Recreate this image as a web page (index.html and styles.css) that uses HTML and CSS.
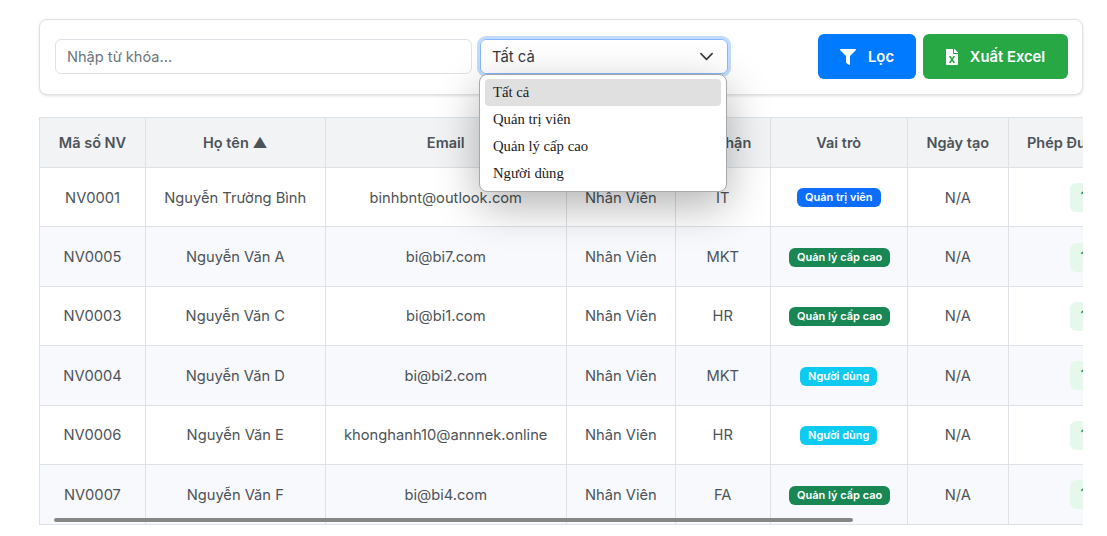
FILE: index.html
```html
<!DOCTYPE html>
<html lang="en">
<head>
    <meta charset="UTF-8">
    <meta name="viewport" content="width=device-width, initial-scale=1.0">
    <title>Danh sách nhân viên</title>
    <link rel="stylesheet" href="styles.css">
</head>
<body>
    <div class="page">
        <div class="filter-panel">
            <input class="keyword" type="text" placeholder="Nhập từ khóa...">
            <div class="role-select">
                <div class="select-box">
                    <span>Tất cả</span>
                    <svg class="chevron" viewBox="0 0 16 16"><path d="M2 5l6 6 6-6"/></svg>
                </div>
                <ul class="select-menu">
                    <li class="active">Tất cả</li>
                    <li>Quản trị viên</li>
                    <li>Quản lý cấp cao</li>
                    <li>Người dùng</li>
                </ul>
            </div>
            <div class="actions">
                <button class="btn btn-filter">
                    <svg class="icon" viewBox="0 0 512 512"><path d="M487.976 0H24.028C2.71 0-8.047 25.866 7.058 40.971L192 225.941V432c0 7.831 3.821 15.17 10.237 19.662l80 55.98C298.02 518.69 320 507.493 320 487.98V225.941l184.947-184.97C520.021 25.896 509.338 0 487.976 0z"/></svg>
                    Lọc
                </button>
                <button class="btn btn-excel">
                    <svg class="icon icon-file" viewBox="0 0 384 512"><path d="M224 136V0H24C10.7 0 0 10.7 0 24v464c0 13.3 10.7 24 24 24h336c13.3 0 24-10.7 24-24V160H248c-13.2 0-24-10.8-24-24zm60.1 106.5L224 336l60.1 93.5c5.1 8-.6 18.5-10.1 18.5h-34.9c-4.4 0-8.5-2.4-10.6-6.3C208.9 405.5 192 373 192 373c-6.4 14.8-10 20-36.6 68.8-2.1 3.9-6.1 6.3-10.5 6.3H110c-9.5 0-15.2-10.5-10.1-18.5l60.3-93.5-60.3-93.5c-5.2-8 .6-18.5 10.1-18.5h34.8c4.4 0 8.5 2.4 10.6 6.3 26.1 48.8 20 33.6 36.6 68.5 0 0 6.1-11.7 36.6-68.5 2.1-3.9 6.2-6.3 10.6-6.3H274c9.5-.1 15.2 10.4 10.1 18.4zM384 121.9v6.1H256V0h6.1c6.4 0 12.5 2.5 17 7l97.9 98c4.5 4.5 7 10.6 7 16.9z"/></svg>
                    Xuất Excel
                </button>
            </div>
        </div>

        <div class="table-wrap">
            <table class="staff-table">
                <colgroup>
                    <col class="c-id"><col class="c-name"><col class="c-email"><col class="c-pos">
                    <col class="c-dept"><col class="c-role"><col class="c-date"><col class="c-leave">
                </colgroup>
                <thead>
                    <tr>
                        <th>Mã số NV</th>
                        <th>Họ tên ▲</th>
                        <th>Email</th>
                        <th>Chức vụ</th>
                        <th>Bộ phận</th>
                        <th>Vai trò</th>
                        <th>Ngày tạo</th>
                        <th>Phép Được Hưởng</th>
                    </tr>
                </thead>
                <tbody>
                    <tr>
                        <td>NV0001</td><td>Nguyễn Trường Bình</td><td>binhbnt@outlook.com</td><td>Nhân Viên</td><td>IT</td>
                        <td><span class="badge badge-admin">Quản trị viên</span></td><td>N/A</td><td><span class="leave">12</span></td>
                    </tr>
                    <tr>
                        <td>NV0005</td><td>Nguyễn Văn A</td><td>bi@bi7.com</td><td>Nhân Viên</td><td>MKT</td>
                        <td><span class="badge badge-manager">Quản lý cấp cao</span></td><td>N/A</td><td><span class="leave">12</span></td>
                    </tr>
                    <tr>
                        <td>NV0003</td><td>Nguyễn Văn C</td><td>bi@bi1.com</td><td>Nhân Viên</td><td>HR</td>
                        <td><span class="badge badge-manager">Quản lý cấp cao</span></td><td>N/A</td><td><span class="leave">12</span></td>
                    </tr>
                    <tr>
                        <td>NV0004</td><td>Nguyễn Văn D</td><td>bi@bi2.com</td><td>Nhân Viên</td><td>MKT</td>
                        <td><span class="badge badge-user">Người dùng</span></td><td>N/A</td><td><span class="leave">12</span></td>
                    </tr>
                    <tr>
                        <td>NV0006</td><td>Nguyễn Văn E</td><td>khonghanh10@annnek.online</td><td>Nhân Viên</td><td>HR</td>
                        <td><span class="badge badge-user">Người dùng</span></td><td>N/A</td><td><span class="leave">12</span></td>
                    </tr>
                    <tr>
                        <td>NV0007</td><td>Nguyễn Văn F</td><td>bi@bi4.com</td><td>Nhân Viên</td><td>FA</td>
                        <td><span class="badge badge-manager">Quản lý cấp cao</span></td><td>N/A</td><td><span class="leave">12</span></td>
                    </tr>
                </tbody>
            </table>
            <div class="scroll-thumb"></div>
        </div>
    </div>
</body>
</html>
```

FILE: styles.css
```css
* {
    box-sizing: border-box;
}
body {
    font-family: Inter, "Noto Sans", sans-serif;
    margin: 0;
    background-color: #fff;
    color: #4d5359;
}
.page {
    padding: 19px 24px 0 39px;
}
.filter-panel {
    display: flex;
    align-items: center;
    height: 76px;
    padding: 0 14px 2px 15px;
    border: 1px solid #dee2e6;
    border-radius: 8px;
    box-shadow: 0 1px 3px rgba(0,0,0,0.12);
    background-color: #fff;
}
.keyword {
    width: 417px;
    height: 35px;
    padding: 2px 11px 0;
    border: 1px solid #dee2e6;
    border-radius: 6px;
    font-family: inherit;
    font-size: 14.6px;
    color: #495057;
}
.keyword::placeholder {
    color: #6c757d;
}
.role-select {
    position: relative;
    width: 248px;
    margin-left: 8px;
}
.select-box {
    display: flex;
    align-items: center;
    justify-content: space-between;
    height: 35px;
    padding: 0 13px 0 11px;
    border: 1px solid #86b7fe;
    border-radius: 6px;
    box-shadow: 0 0 0 3px #c2dbfe;
    font-size: 14.8px;
    color: #343a40;
}
.select-box span {
    padding-top: 2px;
}
.chevron {
    width: 15px;
    height: 15px;
    fill: none;
    stroke: #343a40;
    stroke-width: 1.7;
    stroke-linecap: round;
    stroke-linejoin: round;
}
.select-menu {
    position: absolute;
    top: 35px;
    left: -1px;
    z-index: 10;
    width: 248px;
    height: 118px;
    margin: 0;
    padding: 4px 5px;
    list-style: none;
    background-color: #fff;
    border: 1px solid #a8a8a8;
    border-radius: 8px;
    box-shadow: 0 14px 44px rgba(0,0,0,0.3);
    font-family: "Liberation Serif", serif;
    font-size: 14.7px;
    color: #1a1a1a;
}
.select-menu li {
    height: 27px;
    line-height: 27px;
    padding: 0 8px;
    border-radius: 4px;
}
.select-menu .active {
    background-color: #e0e0e0;
}
.actions {
    display: flex;
    gap: 7px;
    margin-left: auto;
}
.btn {
    display: flex;
    align-items: center;
    justify-content: center;
    height: 45px;
    padding-top: 2px;
    border: none;
    border-radius: 6px;
    font-family: inherit;
    font-size: 14.8px;
    font-weight: 600;
    color: #fff;
}
.btn-filter {
    width: 98px;
    gap: 12px;
    background-color: #007bff;
}
.btn-excel {
    width: 145px;
    gap: 12px;
    background-color: #28a745;
}
.icon {
    width: 16px;
    height: 16px;
    fill: #fff;
}
.icon-file {
    width: 12px;
}
.table-wrap {
    position: relative;
    height: 408px;
    margin-top: 22px;
    overflow: hidden;
    border-left: 1px solid #dee2e6;
}
.staff-table {
    width: 1128px;
    table-layout: fixed;
    border-collapse: collapse;
    font-size: 14.7px;
    text-align: center;
}
.c-id { width: 105px; }
.c-name { width: 180px; }
.c-email { width: 241px; }
.c-pos { width: 109px; }
.c-dept { width: 95px; }
.c-role { width: 137px; }
.c-date { width: 101px; }
.c-leave { width: 160px; }
.staff-table th,
.staff-table td {
    padding: 0 18px 0 18.5px;
    border: 1px solid #dee2e6;
    white-space: nowrap;
}
.staff-table th:first-child,
.staff-table td:first-child {
    border-left: none;
}
.staff-table th {
    height: 50px;
    background-color: #f1f3f5;
    font-size: 14.5px;
    font-weight: 600;
}
.staff-table td {
    height: 59.4px;
    padding-top: 1px;
}
.staff-table tbody tr:last-child td {
    height: 60px;
}
.staff-table tbody tr:nth-child(even) td {
    background-color: #f8f9fc;
}
.badge {
    display: inline-block;
    padding: 0 8px;
    height: 19px;
    line-height: 19px;
    border-radius: 6px;
    font-size: 11px;
    font-weight: 600;
    color: #fff;
    vertical-align: middle;
}
.badge-admin {
    background-color: #0d6efd;
}
.badge-manager {
    background-color: #198754;
}
.badge-user {
    background-color: #0dcaf0;
}
.leave {
    display: inline-block;
    width: 36px;
    height: 29px;
    line-height: 29px;
    border-radius: 6px;
    background-color: #e6f8ec;
    color: #198754;
    font-weight: 600;
    vertical-align: middle;
}
.scroll-thumb {
    position: absolute;
    left: 14px;
    bottom: 3px;
    width: 799px;
    height: 4px;
    border-radius: 2px;
    background-color: #868686;
}
```
